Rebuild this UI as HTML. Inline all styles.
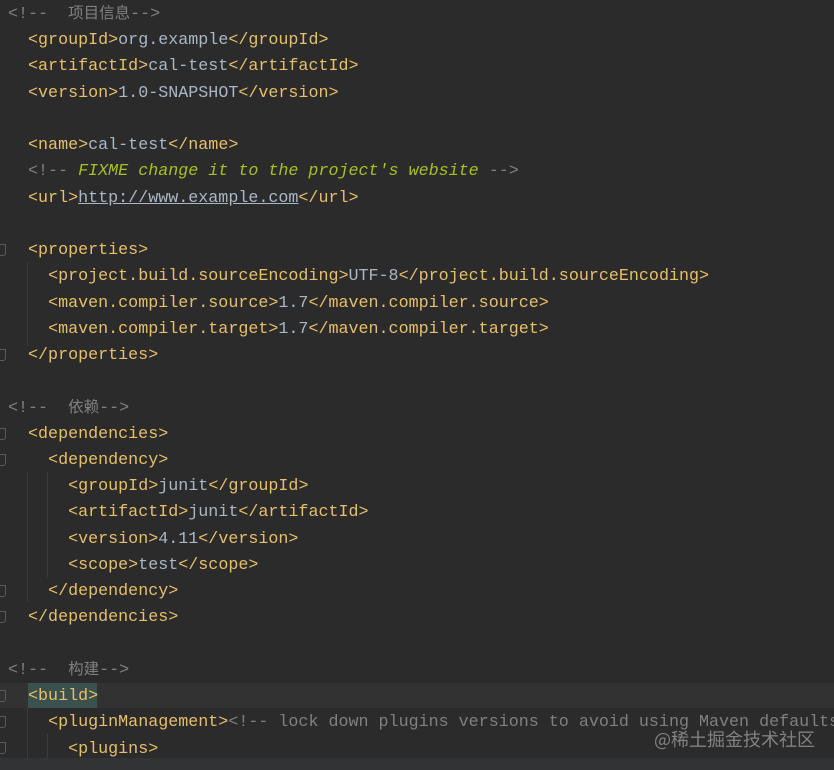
<!DOCTYPE html>
<html><head><meta charset="utf-8"><style>
html,body{margin:0;padding:0;background:#2b2b2b;width:834px;height:770px;overflow:hidden;position:relative}
.code{position:absolute;left:8px;top:2px;font-family:"Liberation Mono","Noto Sans CJK SC",monospace;font-size:16.7px;line-height:26.23px;white-space:pre;color:#a9b7c6}
.t{color:#e8bf6a}.c{color:#808080}.i{color:#a8c023;font-style:italic}.u{text-decoration:underline}
.cj{font-family:"Noto Sans CJK SC",sans-serif;font-size:15.5px;line-height:0}
.cur{position:absolute;left:0;top:683px;width:834px;height:25px;background:#323232}
.hl{position:absolute;left:28px;top:683px;width:69px;height:25px;background:#3b514d}
.g{position:absolute;width:1px;background:#3c3c3c}
.fold{position:absolute;left:0;width:5px;height:10px;border:1px solid #5a5a5a;border-left:none;border-radius:0 0 3px 0}
.bot{position:absolute;left:0;top:758px;width:834px;height:12px;background:#313335}
.wm{position:absolute;left:654px;top:726px;font-family:"Noto Sans CJK SC",sans-serif;font-size:18px;color:rgba(200,200,200,0.55)}
</style></head><body>
<div class="cur"></div><div class="hl"></div>
<div class="g" style="left:27px;top:262px;height:84px"></div>
<div class="g" style="left:27px;top:472px;height:130px"></div>
<div class="g" style="left:47px;top:472px;height:105px"></div>
<div class="g" style="left:27px;top:708px;height:50px"></div>
<div class="g" style="left:47px;top:734px;height:24px"></div>
<div class="fold" style="top:244px"></div>
<div class="fold" style="top:349px"></div>
<div class="fold" style="top:428px"></div>
<div class="fold" style="top:454px"></div>
<div class="fold" style="top:585px"></div>
<div class="fold" style="top:611px"></div>
<div class="fold" style="top:690px"></div>
<div class="fold" style="top:716px"></div>
<div class="fold" style="top:742px"></div>
<div class="code"><span class="c">&lt;!--  <span class="cj">项目信息</span>--&gt;</span>
  <span class="t">&lt;groupId&gt;</span>org.example<span class="t">&lt;/groupId&gt;</span>
  <span class="t">&lt;artifactId&gt;</span>cal-test<span class="t">&lt;/artifactId&gt;</span>
  <span class="t">&lt;version&gt;</span>1.0-SNAPSHOT<span class="t">&lt;/version&gt;</span>

  <span class="t">&lt;name&gt;</span>cal-test<span class="t">&lt;/name&gt;</span>
  <span class="c">&lt;!-- </span><span class="i">FIXME change it to the project's website</span><span class="c"> --&gt;</span>
  <span class="t">&lt;url&gt;</span><span class="u">http://www.example.com</span><span class="t">&lt;/url&gt;</span>

  <span class="t">&lt;properties&gt;</span>
    <span class="t">&lt;project.build.sourceEncoding&gt;</span>UTF-8<span class="t">&lt;/project.build.sourceEncoding&gt;</span>
    <span class="t">&lt;maven.compiler.source&gt;</span>1.7<span class="t">&lt;/maven.compiler.source&gt;</span>
    <span class="t">&lt;maven.compiler.target&gt;</span>1.7<span class="t">&lt;/maven.compiler.target&gt;</span>
  <span class="t">&lt;/properties&gt;</span>

<span class="c">&lt;!--  <span class="cj">依赖</span>--&gt;</span>
  <span class="t">&lt;dependencies&gt;</span>
    <span class="t">&lt;dependency&gt;</span>
      <span class="t">&lt;groupId&gt;</span>junit<span class="t">&lt;/groupId&gt;</span>
      <span class="t">&lt;artifactId&gt;</span>junit<span class="t">&lt;/artifactId&gt;</span>
      <span class="t">&lt;version&gt;</span>4.11<span class="t">&lt;/version&gt;</span>
      <span class="t">&lt;scope&gt;</span>test<span class="t">&lt;/scope&gt;</span>
    <span class="t">&lt;/dependency&gt;</span>
  <span class="t">&lt;/dependencies&gt;</span>

<span class="c">&lt;!--  <span class="cj">构建</span>--&gt;</span>
  <span class="t">&lt;build&gt;</span>
    <span class="t">&lt;pluginManagement&gt;</span><span class="c">&lt;!-- lock down plugins versions to avoid using Maven defaults</span>
      <span class="t">&lt;plugins&gt;</span></div>
<div class="bot"></div>
<div class="wm">@稀土掘金技术社区</div>
</body></html>
